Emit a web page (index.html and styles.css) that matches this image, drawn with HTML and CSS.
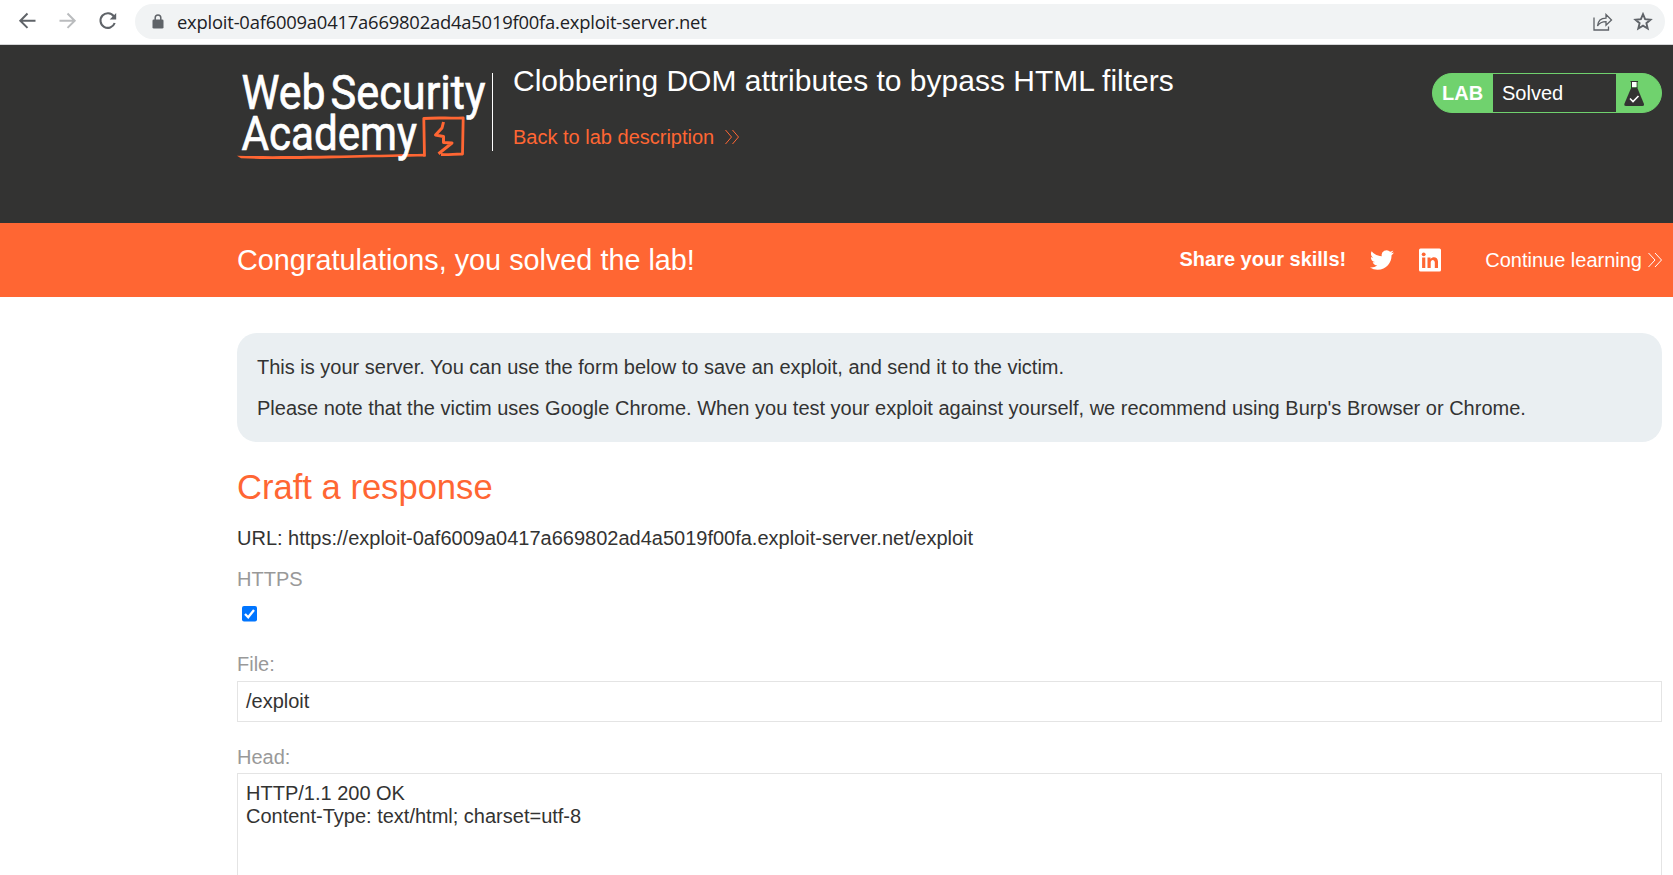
FILE: index.html
```html
<!DOCTYPE html>
<html lang="en">
<head>
<meta charset="utf-8">
<title>Exploit server</title>
<link rel="stylesheet" href="styles.css">
</head>
<body>
<div class="toolbar">
  <svg class="nav-icons" width="135" height="44" viewBox="0 0 135 44" fill="none" stroke-width="2">
    <path d="M35.500 20.700H20.500M27.500 13.500L20.300 20.700L27.500 27.900" stroke="#5f6368"/>
    <path d="M59.500 20.700H74.500M67.500 13.500L74.700 20.700L67.500 27.900" stroke="#babcbe"/>
    <path d="M113.800 16.400A7.300 7.300 0 1 0 114.700 23" stroke="#5f6368" stroke-width="2.100"/>
    <path d="M116.200 13V19.500H109.700Z" fill="#5f6368"/>
  </svg>
  <div class="address">
    <svg class="lock" width="12" height="15" viewBox="0 0 12 15"><path d="M3.200 6V3.800a2.800 2.800 0 0 1 5.600 0V6" fill="none" stroke="#5f6368" stroke-width="1.500"/><rect x=".5" y="5.500" width="11" height="9" rx="1.300" fill="#5f6368"/></svg>
    <span class="url">exploit-0af6009a0417a669802ad4a5019f00fa.exploit-server.net</span>
    <svg class="share" width="20" height="18" viewBox="0 0 20 18" fill="none" stroke="#5f6368" stroke-width="1.300"><path d="M1 4.500V17H15.500V13.500"/><path d="M4.500 13C5 7.800 8 5.200 13 5.200V1.500L18.500 7L13 12.200V8.700C9 8.700 6.300 10 4.500 13Z"/></svg>
    <svg class="star" width="20" height="19" viewBox="0 0 20 19" fill="none" stroke="#5f6368" stroke-width="1.900"><path d="M10 2.200L12.100 7.200L17.500 7.700L13.400 11.200L14.700 16.500L10 13.700L5.300 16.500L6.600 11.200L2.500 7.700L7.900 7.200Z"/></svg>
  </div>
</div>
<header class="lab-header">
  <svg class="logo" width="256" height="100" viewBox="237 65 256 100">
    <g class="logo-text">
      <text x="241.500" y="108.800" textLength="84" lengthAdjust="spacingAndGlyphs">Web</text>
      <text x="330.500" y="108.800" textLength="155" lengthAdjust="spacingAndGlyphs">Security</text>
    </g>
    <path d="M237 155.800C290 157 370 154.800 425 153.800L425.200 156.500C370 156.700 290 160.800 241 158.200Z" fill="#ff6633"/>
    <g class="logo-text"><text x="241.500" y="149.800" textLength="175.500" lengthAdjust="spacingAndGlyphs">Academy</text></g>
    <g fill="none" stroke="#ff6633" stroke-width="2.800" stroke-linejoin="round">
      <path d="M424.500 156.500L423.800 118.500C436 117.300 450 118.600 463.200 117.800L462.500 154C455 153.800 449 155 441 154.500"/>
      <path d="M443.500 122L442 128L435.500 135L443.500 136.500V142.500L452 143L438.500 153.700" stroke-width="3"/>
    </g>
    <path d="M492.500 73V151" stroke="#fff"/>
  </svg>
  <div class="heading">
    <h1>Clobbering DOM attributes to bypass HTML filters</h1>
    <a class="back"><span>Back to lab description</span><svg width="16" height="16" viewBox="0 0 16 16" fill="none" stroke="currentColor"><path d="M1.500 1L7.500 8L1.500 15M8.500 1L14.500 8L8.500 15"/></svg></a>
  </div>
  <div class="badge">
    <strong>LAB</strong><span class="status">Solved</span>
    <svg width="45" height="38" viewBox="0 0 45 38"><path d="M14.500 7.500H22M15.500 7V14M21 7V14" stroke="#333332" fill="none"/><path d="M16 8H20.500V13H16Z" fill="#fff"/><path d="M15.300 13.500H21.200L28 30Q28.500 32 26.500 32H9.800Q7.800 32 8.300 30Z" fill="#333332"/><path d="M14 24.500L17 27.500L22.500 22" stroke="#fff" stroke-width="1.600" fill="none"/></svg>
  </div>
</header>
<section class="banner">
  <h2>Congratulations, you solved the lab!</h2>
  <strong class="skills">Share your skills!</strong>
  <svg class="twitter" width="24" height="24" viewBox="0 0 24 24" fill="#fff"><path d="M23.950 4.570a10 10 0 0 1-2.820.770 4.960 4.960 0 0 0 2.160-2.720c-.950.550-2 .950-3.130 1.180a4.920 4.920 0 0 0-8.380 4.480C7.690 8.090 4.070 6.130 1.640 3.160a4.820 4.820 0 0 0-.670 2.480c0 1.710.870 3.210 2.190 4.100a4.900 4.900 0 0 1-2.230-.620v.060a4.920 4.920 0 0 0 3.950 4.830 5 5 0 0 1-2.210.080 4.940 4.940 0 0 0 4.600 3.420A9.870 9.870 0 0 1 0 19.540a14 14 0 0 0 7.550 2.210c9.050 0 14-7.500 14-13.980 0-.210 0-.420-.020-.630a9.900 9.900 0 0 0 2.420-2.570Z"/></svg>
  <svg class="linkedin" width="24" height="24" viewBox="0 0 24 24"><rect x="1" y=".5" width="22" height="23" rx="1.500" fill="#fff"/><g fill="#ff6633"><circle cx="5.700" cy="6.300" r="1.900"/><path d="M4.100 9.500H7.300V20H4.100ZM9.500 9.500H12.500V11C14.500 8 20 8.500 20 13.500V20H16.800V14.500C16.800 11 12.700 11 12.700 14.500V20H9.500Z"/></g></svg>
  <a class="continue"><span>Continue learning</span><svg width="16" height="16" viewBox="0 0 16 16" fill="none" stroke="currentColor"><path d="M1.500 1L8 8L1.500 15M8 1L14.500 8L8 15"/></svg></a>
</section>
<main>
  <div class="notice">
    <p>This is your server. You can use the form below to save an exploit, and send it to the victim.</p>
    <p>Please note that the victim uses Google Chrome. When you test your exploit against yourself, we recommend using Burp's Browser or Chrome.</p>
  </div>
  <h2 class="craft">Craft a response</h2>
  <p class="target">URL: https://exploit-0af6009a0417a669802ad4a5019f00fa.exploit-server.net/exploit</p>
  <form>
    <label class="https">HTTPS</label>
    <div class="check"><svg width="16" height="16" viewBox="0 0 16 16"><rect width="15" height="15.500" rx="2" fill="#0075ff"/><path d="M3 8L6.200 11.200L12 4" fill="none" stroke="#fff" stroke-width="2.300"/></svg></div>
    <label class="file">File:</label>
    <div class="input">/exploit</div>
    <label class="head">Head:</label>
    <div class="textarea">HTTP/1.1 200 OK
Content-Type: text/html; charset=utf-8</div>
  </form>
</main>
</body>
</html>
```
FILE: styles.css
```css
* { box-sizing: border-box; }
body { margin: 0; width: 1673px; height: 875px; overflow: hidden; background: #fff; color: #333332; font: 20px/24px "Liberation Sans", Arial, sans-serif; }
h1, h2, p { margin: 0; font-weight: 400; }
svg { display: block; flex: none; }
.toolbar { display: flex; height: 45px; border-bottom: 1px solid #d5d6d8; }
.address { display: flex; align-items: center; width: 1530px; height: 35px; margin-top: 4px; padding: 0 12px 0 17px; border-radius: 18px; background: #f1f3f4; }
.lock { margin-right: 13px; }
.url { flex: 1; padding-bottom: 1px; color: #202124; font: 18.400px/33px "Open Sans", sans-serif; letter-spacing: -.21px; white-space: nowrap; }
.share { margin-right: 20px; }
.lab-header { display: flex; height: 178px; padding: 20px 11px 0 237px; background: #333332; color: #fff; }
.logo { overflow: visible; }
.logo-text { fill: #fff; stroke: #fff; stroke-width: .7px; font: 400 48px Roboto, sans-serif; }
.heading { flex: 1; padding-left: 20px; white-space: nowrap; }
h1 { font-size: 30px; line-height: 32px; }
.back { display: flex; align-items: center; gap: 10px; margin-top: 28px; color: #ff6633; }
.badge { display: flex; width: 230px; height: 40px; margin-top: 8px; border: 1px solid #70d26e; border-radius: 20px; overflow: hidden; background: #70d26e; line-height: 39px; }
.badge strong { width: 60px; padding-left: 9px; font-size: 20px; }
.status { width: 123px; padding-left: 9px; background: #333332; }
.banner { display: flex; align-items: center; height: 74px; padding: 0 10px 0 237px; background: #ff6633; color: #fff; white-space: nowrap; }
.banner h2 { flex: 1; font-size: 28.800px; }
.skills { padding-bottom: 2px; }
.twitter { margin: 0 24px; }
.linkedin { margin-right: 43px; }
.continue { display: flex; align-items: center; gap: 5px; }
main { padding: 36px 11px 0 237px; white-space: nowrap; }
.notice { height: 109px; padding: 22px 20px; border-radius: 20px; background: #eaeff2; }
.notice p + p { margin-top: 17px; }
.craft { margin-top: 25px; color: #ff6633; font-size: 34.600px; line-height: 40px; }
.target { margin-top: 19px; }
label { display: block; color: #999; }
.https { margin-top: 17px; }
.check { height: 16px; margin: 15px 0 0 5px; }
.file { margin-top: 30px; }
.input { height: 41px; margin-top: 5px; padding: 7px 8px; border: 1px solid #e4e4e4; }
.head { margin-top: 23px; }
.textarea { height: 130px; margin-top: 4px; padding: 8px; border: 1px solid #e4e4e4; line-height: 23px; white-space: pre; }
```
